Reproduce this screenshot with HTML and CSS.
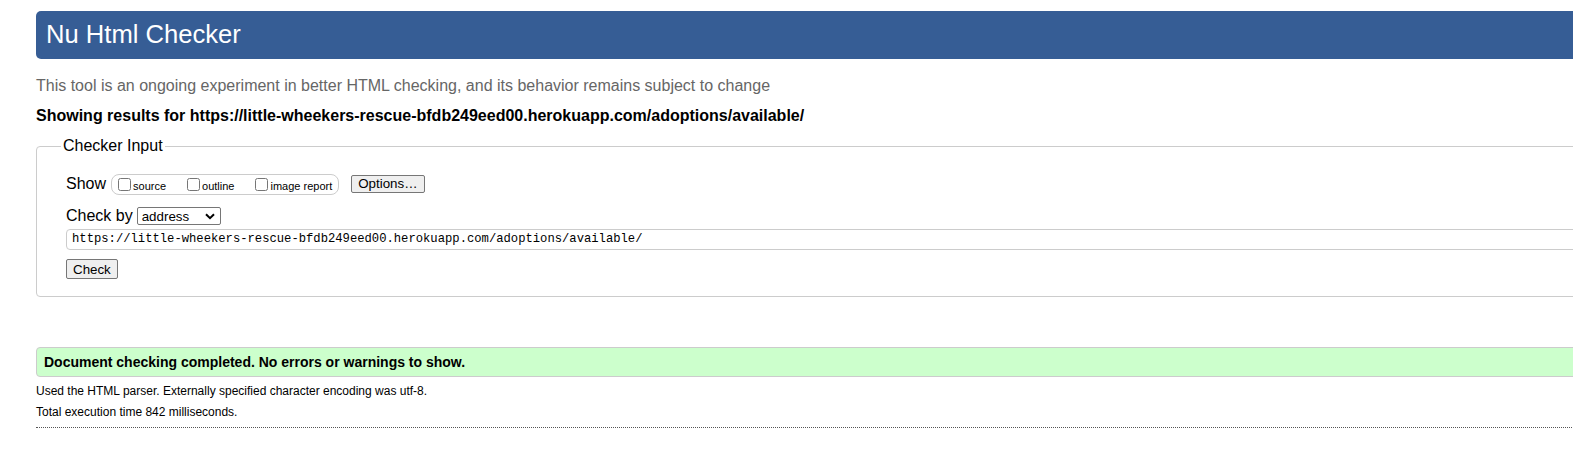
FILE: index.html
```html
<!DOCTYPE html>
<html lang="en">
<head>
<meta charset="utf-8">
<title>Showing results for https://little-wheekers-rescue-bfdb249eed00.herokuapp.com/adoptions/available/ - Nu Html Checker</title>
<link rel="stylesheet" href="styles.css">
</head>
<body>
<div class="page">
  <h1 class="banner">Nu Html Checker</h1>
  <p class="intro">This tool is an ongoing experiment in better HTML checking, and its behavior remains subject to change</p>
  <p class="results-for">Showing results for https://little-wheekers-rescue-bfdb249eed00.herokuapp.com/adoptions/available/</p>

  <fieldset class="input-box">
    <legend class="input-legend">Checker Input</legend>
    <div class="row show-row">
      <span class="row-label">Show</span>
      <span class="opts">
        <label class="opt"><input type="checkbox" class="cb"><span>source</span></label>
        <label class="opt"><input type="checkbox" class="cb"><span>outline</span></label>
        <label class="opt"><input type="checkbox" class="cb"><span>image report</span></label>
      </span>
      <button class="btn options-btn" type="button">Options…</button>
    </div>
    <div class="row by-row">
      <span class="row-label">Check by</span>
      <span class="select">
        <span>address</span>
        <svg class="chev" width="10" height="7" viewBox="0 0 10 7"><path d="M1 1.2 L5 5.2 L9 1.2" fill="none" stroke="#000" stroke-width="2"/></svg>
      </span>
    </div>
    <div class="url-field">https://little-wheekers-rescue-bfdb249eed00.herokuapp.com/adoptions/available/</div>
    <div class="row">
      <button class="btn check-btn" type="button">Check</button>
    </div>
  </fieldset>

  <div class="success">Document checking completed. No errors or warnings to show.</div>
  <p class="meta">Used the HTML parser. Externally specified character encoding was utf-8.</p>
  <p class="meta">Total execution time 842 milliseconds.</p>
  <hr class="dots">
</div>
</body>
</html>
```

FILE: styles.css
```css
html, body {
  margin: 0;
  padding: 0;
  overflow: hidden;
  background: #fff;
}
body {
  font-family: "Liberation Sans", Arial, sans-serif;
  color: #000;
}
.page {
  width: 1640px;
  padding: 11px 0 0 36px;
}
.banner {
  margin: 0;
  height: 48px;
  box-sizing: border-box;
  padding: 0 0 0 10px;
  background: #365d95;
  color: #fff;
  font-weight: normal;
  font-size: 25.6px;
  line-height: 47px;
  border-radius: 5px;
}
.intro {
  margin: 17px 0 0;
  font-size: 16px;
  line-height: 20px;
  color: #666;
}
.results-for {
  margin: 10px 0 0;
  font-size: 16px;
  line-height: 20px;
  font-weight: bold;
}
.input-box {
  margin: 11px 0 0;
  padding: 18px 29px 17px;
  border: 1px solid #ccc;
  border-radius: 4px;
}
.input-legend {
  font-size: 16px;
  padding: 0 2px;
  margin-left: -5px;
  line-height: 18px;
}
.row {
  display: flex;
  align-items: center;
}
.row-label {
  font-size: 16px;
  line-height: 20px;
}
.show-row {
  height: 22px;
}
.opts {
  display: flex;
  align-items: center;
  margin-left: 5px;
  height: 19px;
  padding: 0 6px 0 6px;
  border: 1px solid #ccc;
  border-radius: 8px;
}
.opt {
  display: flex;
  align-items: center;
  font-size: 11px;
  color: #000;
  margin-right: 21px;
}
.opt span {
  position: relative;
  top: 2px;
}
.opt:last-child {
  margin-right: 0;
}
.cb {
  width: 13px;
  height: 13px;
  margin: 0 2px 0 0;
}
.btn {
  font-family: "Liberation Sans", Arial, sans-serif;
  font-size: 13.33px;
  background: #efefef;
  border: 1px solid #767676;
  border-radius: 2px;
  padding: 1px 6px;
  color: #000;
}
.options-btn {
  margin-left: 12px;
  height: 18px;
  padding: 0 6px;
  line-height: 16px;
}
.by-row {
  margin-top: 11px;
}
.select {
  display: flex;
  align-items: center;
  justify-content: space-between;
  width: 84px;
  height: 18px;
  box-sizing: border-box;
  margin-left: 4px;
  padding: 0 5px 0 4px;
  border: 1px solid #767676;
  border-radius: 2px;
  font-size: 13.33px;
}
.chev {
  display: block;
}
.url-field {
  margin-top: 3px;
  height: 21px;
  box-sizing: border-box;
  border: 1px solid #ccc;
  border-radius: 4px;
  padding: 0 5px;
  font-family: "Liberation Mono", "DejaVu Sans Mono", monospace;
  font-size: 12.2px;
  line-height: 19px;
}
.check-btn {
  margin-top: 9px;
  height: 20px;
}
.success {
  margin-top: 50px;
  height: 30px;
  box-sizing: border-box;
  padding: 0 7px;
  background: #ccffcc;
  border: 1px solid #ccc;
  border-radius: 4px;
  font-size: 14px;
  font-weight: bold;
  line-height: 28px;
}
.meta {
  margin: 7px 0 0;
  font-size: 12px;
  line-height: 15px;
}
.meta + .meta {
  margin-top: 6px;
}
.dots {
  margin: 7px 0 0;
  border: 0;
  border-top: 1px dotted #555;
  height: 0;
}
```
